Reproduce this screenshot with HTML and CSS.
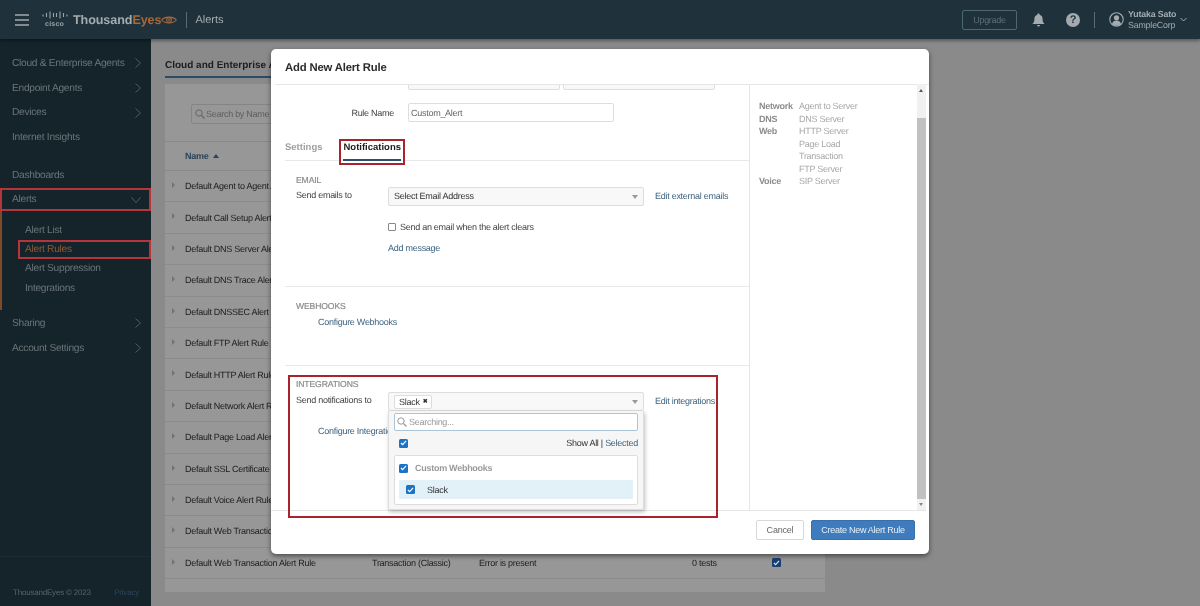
FILE: index.html
```html
<!DOCTYPE html>
<html lang="en">
<head>
<meta charset="utf-8">
<title>ThousandEyes Alerts</title>
<link rel="stylesheet" href="styles.css">
</head>
<body>
<div class="app">
  <header class="topbar">
    <svg class="burger" width="14" height="12" viewBox="0 0 14 12"><path d="M0 1h14M0 6h14M0 11h14" stroke="#a3abae" stroke-width="1.5"/></svg>
    <div class="cisco">
      <svg width="26" height="9" viewBox="0 0 26 9"><path d="M1 3.500v2M4.500 2v4M8 0.500v7M11.500 2v4M14.500 2v4M18 0.500v7M21.500 2v4M25 3.500v2" stroke="#9aa2a6" stroke-width="1.100"/></svg>
      <span class="cisco-word">cisco</span>
    </div>
    <div class="brand"><span class="thousand">Thousand</span><span class="eyes">Eyes</span></div>
    <svg class="eye" width="16" height="10" viewBox="0 0 18 11"><path d="M0.800 5.500C4 1.200 14 1.200 17.200 5.500C14 9.800 4 9.800 0.800 5.500Z" fill="none" stroke="#a8683a" stroke-width="1.300"/><circle cx="9" cy="5.500" r="2.700" fill="none" stroke="#a8683a" stroke-width="1.200"/><circle cx="9" cy="5.500" r="1" fill="#a8683a"/></svg>
    <span class="top-sep"></span>
    <span class="page-name">Alerts</span>
    <div class="top-right">
      <span class="upgrade">Upgrade</span>
      <svg class="bell" width="13" height="14" viewBox="0 0 13 14"><path d="M6.500 0.500c.8 0 1.200.5 1.200 1.200C9.700 2.300 10.600 4 10.600 6c0 2.500.6 3.700 2 5H.4c1.400-1.300 2-2.500 2-5 0-2 .9-3.700 2.900-4.300 0-.7.400-1.200 1.200-1.200ZM5 12h3a1.500 1.500 0 0 1-3 0Z" fill="#a3abae"/></svg>
      <span class="help">?</span>
      <span class="top-sep2"></span>
      <svg class="avatar" width="15" height="15" viewBox="0 0 15 15"><circle cx="7.500" cy="7.500" r="6.700" fill="none" stroke="#a3abae" stroke-width="1.100"/><circle cx="7.500" cy="5.800" r="2.600" fill="#a3abae"/><path d="M3 12c.6-2.600 2.400-3.500 4.500-3.500S11.400 9.400 12 12a6.500 6.500 0 0 1-9 0Z" fill="#a3abae"/></svg>
      <div class="user"><div class="user-name">Yutaka Sato</div><div class="user-org">SampleCorp</div></div>
      <svg class="user-caret" width="7" height="5" viewBox="0 0 7 5"><path d="M.5 1l3 3 3-3" fill="none" stroke="#a3abae"/></svg>
    </div>
  </header>

  <div class="body-row">
    <aside class="sidebar">
      <nav class="nav">
        <div class="nav-item">Cloud &amp; Enterprise Agents<svg class="chev" width="6" height="10" viewBox="0 0 6 10"><path d="M.5.500l5 4.500-5 4.500" fill="none" stroke="#4f5c62"/></svg></div>
        <div class="nav-item">Endpoint Agents<svg class="chev" width="6" height="10" viewBox="0 0 6 10"><path d="M.5.500l5 4.500-5 4.500" fill="none" stroke="#4f5c62"/></svg></div>
        <div class="nav-item">Devices<svg class="chev" width="6" height="10" viewBox="0 0 6 10"><path d="M.5.500l5 4.500-5 4.500" fill="none" stroke="#4f5c62"/></svg></div>
        <div class="nav-item">Internet Insights</div>
        <div class="nav-item nav-gap">Dashboards</div>
        <div class="nav-item nav-open">Alerts<svg class="chev-down" width="10" height="6" viewBox="0 0 10 6"><path d="M.5.500l4.500 5 4.500-5" fill="none" stroke="#4f5c62"/></svg></div>
        <div class="sub-nav">
          <div class="sub-item">Alert List</div>
          <div class="sub-item sub-active">Alert Rules</div>
          <div class="sub-item">Alert Suppression</div>
          <div class="sub-item">Integrations</div>
        </div>
        <div class="nav-item">Sharing<svg class="chev" width="6" height="10" viewBox="0 0 6 10"><path d="M.5.500l5 4.500-5 4.500" fill="none" stroke="#4f5c62"/></svg></div>
        <div class="nav-item">Account Settings<svg class="chev" width="6" height="10" viewBox="0 0 6 10"><path d="M.5.500l5 4.500-5 4.500" fill="none" stroke="#4f5c62"/></svg></div>
      </nav>
      <footer class="side-foot"><span>ThousandEyes © 2023</span><span class="privacy">Privacy</span></footer>
    </aside>

    <main class="main">
      <div class="main-tab"><span class="main-tab-label">Cloud and Enterprise Agents</span></div>
      <section class="panel">
        <div class="search-row"><div class="search-box"><svg width="10" height="10" viewBox="0 0 10 10"><circle cx="4" cy="4" r="3.200" fill="none" stroke="#666" stroke-width="1"/><path d="M6.500 6.500L9.500 9.500" stroke="#666" stroke-width="1.200"/></svg><span>Search by Name</span></div></div>
        <div class="thead"><span>Name</span><i class="sort-up"></i></div>
        <div class="row"><i class="tri"></i>Default Agent to Agent Alert Rule</div>
        <div class="row"><i class="tri"></i>Default Call Setup Alert Rule</div>
        <div class="row"><i class="tri"></i>Default DNS Server Alert Rule</div>
        <div class="row"><i class="tri"></i>Default DNS Trace Alert Rule</div>
        <div class="row"><i class="tri"></i>Default DNSSEC Alert Rule</div>
        <div class="row"><i class="tri"></i>Default FTP Alert Rule</div>
        <div class="row"><i class="tri"></i>Default HTTP Alert Rule</div>
        <div class="row"><i class="tri"></i>Default Network Alert Rule</div>
        <div class="row"><i class="tri"></i>Default Page Load Alert Rule</div>
        <div class="row"><i class="tri"></i>Default SSL Certificate Alert Rule</div>
        <div class="row"><i class="tri"></i>Default Voice Alert Rule</div>
        <div class="row"><i class="tri"></i>Default Web Transaction Alert Rule</div>
        <div class="row"><i class="tri"></i><span class="col-name">Default Web Transaction Alert Rule</span><span class="col-type">Transaction (Classic)</span><span class="col-cond">Error is present</span><span class="col-tests">0 tests</span><span class="cb cb-dark"><svg width="8" height="7" viewBox="0 0 8 7"><path d="M1 3.500l2 2 4-4.500" fill="none" stroke="#ddd" stroke-width="1.400"/></svg></span></div>
      </section>
    </main>
  </div>

  <div class="modal">
    <div class="modal-head">Add New Alert Rule</div>
    <div class="modal-scroll">
      <div class="form-col">
        <div class="clipped"><span class="clip-box"></span><span class="clip-box"></span></div>
        <div class="rule-row"><label class="rule-label">Rule Name</label><span class="rule-input">Custom_Alert</span></div>
        <div class="tabs"><span class="tab">Settings</span><span class="tab tab-on">Notifications</span></div>
        <section class="block block-email">
          <h3 class="block-title">EMAIL</h3>
          <div class="field">
            <span class="field-label">Send emails to</span>
            <span class="select"><span class="select-text">Select Email Address</span><i class="caret"></i></span>
            <a class="link field-link">Edit external emails</a>
          </div>
          <div class="check-row"><span class="cb-plain"></span>Send an email when the alert clears</div>
          <a class="link add-msg">Add message</a>
        </section>
        <section class="block block-hooks">
          <h3 class="block-title">WEBHOOKS</h3>
          <a class="link conf">Configure Webhooks</a>
        </section>
        <section class="block-int">
          <h3 class="block-title">INTEGRATIONS</h3>
          <div class="field">
            <span class="field-label">Send notifications to</span>
            <span class="select select-int"><span class="chip">Slack <b class="chip-x">✖</b></span><i class="caret"></i></span>
            <a class="link field-link">Edit integrations</a>
          </div>
          <a class="link conf conf-int">Configure Integrations</a>
          <div class="dropdown">
            <div class="dd-search"><svg width="10" height="10" viewBox="0 0 10 10"><circle cx="4" cy="4" r="3.200" fill="none" stroke="#999" stroke-width="1"/><path d="M6.500 6.500L9.500 9.500" stroke="#999" stroke-width="1.200"/></svg><span>Searching...</span></div>
            <div class="dd-tools">
              <span class="cb"><svg width="8" height="7" viewBox="0 0 8 7"><path d="M1 3.500l2 2 4-4.500" fill="none" stroke="#fff" stroke-width="1.400"/></svg></span>
              <span class="dd-show">Show All | <a class="link">Selected</a></span>
            </div>
            <div class="dd-list">
              <div class="dd-group"><span class="cb"><svg width="8" height="7" viewBox="0 0 8 7"><path d="M1 3.500l2 2 4-4.500" fill="none" stroke="#fff" stroke-width="1.400"/></svg></span>Custom Webhooks</div>
              <div class="dd-item"><span class="cb"><svg width="8" height="7" viewBox="0 0 8 7"><path d="M1 3.500l2 2 4-4.500" fill="none" stroke="#fff" stroke-width="1.400"/></svg></span>Slack</div>
            </div>
          </div>
        </section>
      </div>
      <aside class="info-col">
        <div class="info-grid">
          <b>Network</b><span>Agent to Server</span>
          <b>DNS</b><span>DNS Server</span>
          <b>Web</b><span>HTTP Server</span>
          <b></b><span>Page Load</span>
          <b></b><span>Transaction</span>
          <b></b><span>FTP Server</span>
          <b>Voice</b><span>SIP Server</span>
        </div>
      </aside>
      <div class="scrollbar"><i class="sb-up"></i><span class="sb-thumb"></span><i class="sb-down"></i></div>
    </div>
    <div class="modal-foot"><button class="btn">Cancel</button><button class="btn btn-primary">Create New Alert Rule</button></div>
  </div>
</div>
</body>
</html>
```
FILE: styles.css
```css
* { box-sizing: border-box; }
html, body { margin: 0; height: 100%; overflow: hidden; }
body { font-family: "Liberation Sans", Arial, sans-serif; font-size: 9px; letter-spacing: -.27px; color: #333; text-rendering: geometricPrecision; }
a { text-decoration: none; }
.app { position: relative; width: 1200px; height: 606px; background: #868686; display: flex; flex-direction: column; overflow: hidden; filter: blur(.3px); }

.topbar { height: 39px; flex: none; background: #1f323c; display: flex; align-items: center; padding-left: 15px; box-shadow: 0 2px 3px rgba(0,0,0,.35); position: relative; z-index: 1; }
.burger { margin-right: 13px; }
.cisco { width: 25px; display: flex; flex-direction: column; align-items: center; margin-right: 6px; margin-top: -1px; }
.cisco-word { font-size: 7px; line-height: 7px; color: #9aa2a6; font-weight: 700; letter-spacing: .2px; margin-top: 1px; }
.brand { font-size: 12.600px; font-weight: 700; letter-spacing: -.1px; }
.thousand { color: #a3abae; }
.eyes { color: #a8683a; }
.eye { margin-right: 9px; }
.top-sep { width: 1px; height: 16px; background: #5b6b73; margin-right: 8px; }
.page-name { font-size: 11px; letter-spacing: 0; color: #a3abae; }
.top-right { margin-left: auto; display: flex; align-items: center; }
.upgrade { width: 55px; height: 20px; border: 1px solid #4c6672; border-radius: 2px; color: #5d6f78; display: flex; align-items: center; justify-content: center; margin-right: 15px; }
.bell { margin-right: 21px; }
.help { width: 14px; height: 14px; border-radius: 50%; background: #a3abae; color: #1f323c; font-size: 11px; letter-spacing: 0; font-weight: 700; display: flex; align-items: center; justify-content: center; margin-right: 14px; }
.top-sep2 { width: 1px; height: 16px; background: #5b6b73; margin-right: 14px; }
.avatar { margin-right: 4px; }
.user { font-size: 8.800px; letter-spacing: -.16px; line-height: 11px; color: #a3abae; width: 50px; }
.user-name { font-weight: 700; }
.user-caret { margin-left: 2px; margin-right: 13px; }

.body-row { flex: 1; display: flex; min-height: 0; }
.sidebar { width: 151px; flex: none; background: #15242b; display: flex; flex-direction: column; padding-top: 12px; }
.nav { flex: 1; }
.nav-item { height: 24.700px; padding: 0 10px 0 12px; display: flex; align-items: center; justify-content: space-between; font-size: 10.200px; letter-spacing: -.28px; color: #6a7478; position: relative; }
.nav-gap { margin-top: 13px; }
.nav-open { outline: 2px solid #b7343d; outline-offset: -2px; height: 23px; margin-top: 1px; }
.sub-nav { border-left: 2px solid #7d4b28; padding: 9px 0 12px 0; margin-bottom: 1px; }
.sub-item { height: 19.400px; margin-left: 16px; padding-left: 7px; display: flex; align-items: center; font-size: 10.200px; letter-spacing: -.28px; color: #6a7478; }
.sub-active { color: #8a5b38; outline: 2px solid #b7343d; outline-offset: -2px; }
.side-foot { height: 50px; flex: none; border-top: 1px solid #1b2b33; display: flex; justify-content: space-between; padding: 31px 12px 0 13px; font-size: 8px; letter-spacing: -.2px; color: #57636a; }
.privacy { color: #2c4659; }

.main { flex: 1; padding: 20px 0 0 14px; background: #8a8a8a; }
.main-tab { width: 660px; height: 19px; }
.main-tab-label { display: inline-block; width: 106px; white-space: nowrap; font-size: 10px; letter-spacing: 0; font-weight: 700; color: #1d1d1d; border-bottom: 2px solid #2c4b66; height: 19px; line-height: 13px; }
.panel { width: 660px; height: 508px; margin-top: 6px; background: #979797; }
.search-row { height: 58px; padding: 20px 0 0 26px; border-bottom: 1px solid #888; }
.search-box { width: 200px; height: 20px; border: 1px solid #858585; border-radius: 2px; display: flex; align-items: center; padding-left: 3px; gap: 1px; color: #5f5f5f; background: #979797; }
.thead { height: 29px; padding-left: 20px; display: flex; align-items: center; gap: 5px; font-weight: 700; color: #2c4359; border-bottom: 1px solid #888; }
.sort-up { width: 0; height: 0; border: 3.500px solid transparent; border-bottom: 4px solid #2c4359; border-top: 0; }
.row { height: 31.400px; position: relative; padding-left: 20px; display: flex; align-items: center; color: #202020; border-bottom: 1px solid #8b8b8b; white-space: nowrap; }
.tri { position: absolute; left: 7px; top: 11px; width: 0; height: 0; border-left: 3.500px solid #6e7378; border-top: 3.500px solid transparent; border-bottom: 3.500px solid transparent; }
.col-name { width: 187px; }
.col-type { width: 107px; }
.col-cond { width: 213px; }
.col-tests { width: 80px; }
.cb { width: 9px; height: 9px; border-radius: 1.500px; background: #1a73c5; display: inline-flex; align-items: center; justify-content: center; flex: none; }
.cb svg { width: 7px; height: 6px; }
.cb-dark { background: #173f74; }

.modal { position: absolute; left: 271px; top: 49px; width: 658px; height: 505px; background: #fff; border-radius: 5px; box-shadow: 0 2px 5px rgba(0,0,0,.5); display: flex; flex-direction: column; z-index: 2; }
.modal-head { height: 36px; flex: none; margin: 0 0 0 4px; padding: 12px 0 0 10px; font-size: 11.300px; letter-spacing: -.16px; font-weight: 700; color: #2b2b2b; border-bottom: 1px solid #e6e6e6; line-height: 14px; }
.modal-scroll { height: 425px; flex: none; display: flex; margin-right: 3px; }
.form-col { width: 479px; flex: none; border-right: 1px solid #e6e6e6; position: relative; }
.clipped { height: 5px; margin-left: 137px; display: flex; gap: 3px; overflow: hidden; }
.clip-box { width: 152px; height: 20px; margin-top: -15px; border: 1px solid #ddd; border-radius: 2px; background: #f8f8f8; }
.rule-row { display: flex; align-items: center; margin-top: 13px; }
.rule-label { width: 123px; text-align: right; color: #444; }
.rule-input { margin-left: 14px; width: 206px; height: 19px; border: 1px solid #ddd; border-radius: 2px; color: #666; padding-left: 2px; display: flex; align-items: center; }
.tabs { margin: 16px 0 0 14px; height: 23px; border-bottom: 1px solid #e8e8e8; display: flex; gap: 21px; font-size: 9.500px; letter-spacing: 0; font-weight: 700; }
.tab { color: #a0a0a0; line-height: 13px; padding-top: 3px; }
.tab-on { color: #1d1d1d; border-bottom: 2px solid #2f4f6b; height: 23px; position: relative; }
.tab-on::after { content: ""; position: absolute; left: -4px; right: -4px; top: 1px; bottom: -6px; border: 2px solid #a8232c; }
.block { margin-left: 14px; border-bottom: 1px solid #e8e8e8; }
.block-email { height: 126px; padding: 14px 0 0 11px; }
.block-hooks { height: 79px; padding: 14px 0 0 11px; }
.block-title { margin: 0; font-size: 8.600px; letter-spacing: -.12px; line-height: 11px; font-weight: 400; color: #8c8c8c; -webkit-text-stroke: .2px #8c8c8c; position: relative; }
.field { display: flex; align-items: center; height: 19px; margin-top: 1px; }
.field-label { width: 92px; color: #444; flex: none; margin-top: -3px; }
.select { width: 256px; height: 19px; flex: none; position: relative; border: 1px solid #ddd; border-radius: 2px; background: #f8f8f8; color: #333; padding-left: 5px; display: flex; align-items: center; }
.select-text { margin-top: -1px; }
.caret { position: absolute; right: 5px; top: 7px; width: 0; height: 0; border: 3px solid transparent; border-top: 4px solid #999; border-bottom: 0; }
.link { color: #3f6480; }
.field-link { margin-left: 11px; white-space: nowrap; margin-top: -1px; }
.check-row { display: flex; align-items: center; gap: 4px; margin: 11px 0 0 92px; height: 19px; color: #444; }
.cb-plain { width: 8px; height: 8px; border: 1px solid #888; border-radius: 1px; background: #fff; }
.add-msg { display: block; margin: 7px 0 0 92px; line-height: 11px; }
.conf { display: block; margin: 5px 0 0 22px; line-height: 11px; white-space: nowrap; }
.block-int { position: relative; margin: 13px 0 0 25px; height: 131px; }
.block-int::before { content: ""; position: absolute; left: -8px; right: 31px; top: -4px; height: 139px; border: 2px solid #a8232c; pointer-events: none; z-index: 4; }
.block-int .field { margin-top: 2px; }
.select-int { padding-left: 5px; }
.chip { border: 1px solid #ddd; border-radius: 2px; background: #fff; color: #333; padding: 0 4px; height: 14px; display: inline-flex; align-items: center; gap: 3px; }
.chip-x { font-size: 6px; font-weight: 700; }
.conf-int { margin-top: 15px; }
.dropdown { position: absolute; left: 92px; top: 32px; width: 256px; height: 99px; background: #f6f6f6; border: 1px solid #ddd; border-top: 0; box-shadow: 1px 2px 4px rgba(0,0,0,.25); padding: 2px 5px 0 5px; z-index: 3; }
.dd-search { height: 18px; background: #fff; border: 1px solid #aac6d8; border-radius: 2px; display: flex; align-items: center; gap: 2px; padding-left: 2px; color: #999; }
.dd-tools { height: 24px; display: flex; align-items: center; justify-content: space-between; padding-left: 5px; }
.dd-show { color: #333; }
.dd-list { height: 50px; background: #fff; border: 1px solid #ddd; border-radius: 2px; padding: 0 4px; }
.dd-group { height: 24px; display: flex; align-items: center; gap: 7px; font-weight: 700; color: #9a9a9a; }
.dd-item { height: 19px; background: #e2f0f7; display: flex; align-items: center; gap: 12px; padding-left: 7px; color: #333; }

.info-col { width: 167px; flex: none; padding: 15px 0 0 9px; }
.info-grid { display: grid; grid-template-columns: 40px auto; grid-auto-rows: 12.500px; line-height: 12.500px; color: #aaa; }
.info-grid b { font-weight: 700; color: #8c8c8c; }
.info-grid span { color: #a8a8a8; }
.scrollbar { width: 9px; flex: none; margin-top: -1px; background: #f1f1f1; display: flex; flex-direction: column; position: relative; padding: 34px 0 11px 0; }
.sb-thumb { flex: 1; background: #c1c1c1; }
.sb-up, .sb-down { position: absolute; left: 2px; width: 0; height: 0; border: 2.500px solid transparent; }
.sb-up { top: 5px; border-bottom: 3px solid #555; border-top: 0; }
.sb-down { bottom: 4px; border-top: 3px solid #888; border-bottom: 0; }
.modal-foot { flex: 1; margin: 0 3px 0 0; border-top: 1px solid #e6e6e6; display: flex; justify-content: flex-end; align-items: flex-start; gap: 7px; padding: 9px 11px 0 0; }
.btn { height: 20px; padding: 0; width: 48px; font: 9px "Liberation Sans", Arial, sans-serif; letter-spacing: -.2px; color: #666; background: #fff; border: 1px solid #d8d8d8; border-radius: 2px; }
.btn-primary { width: 104px; background: #3f7cbd; border-color: #3a70aa; color: #e9f0f7; letter-spacing: -.27px; }
```
